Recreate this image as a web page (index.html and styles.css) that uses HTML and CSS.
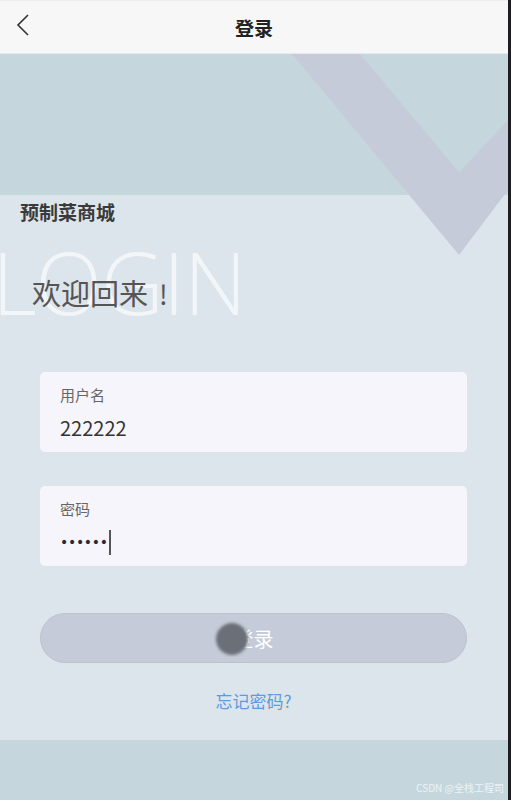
FILE: index.html
```html
<!DOCTYPE html>
<html lang="zh-CN">
<head>
  <meta charset="UTF-8" />
  <meta name="viewport" content="width=device-width, initial-scale=1.0"/>
  <title>登录</title>
  <link rel="stylesheet" href="styles.css">
</head>
<body>
  <div class="page">
    <header class="topbar">
      <span class="back">
        <svg width="16" height="22" viewBox="0 0 16 22"><path d="M13 1 L3 11 L13 21" fill="none" stroke="#333" stroke-width="1.6"/></svg>
      </span>
      <h1>登录</h1>
    </header>

    <main class="hero">
      <svg class="chevron" width="511" height="210" viewBox="0 0 511 210">
        <polygon points="292,0 360,0 459,118 511,63 511,132 459,201" fill="#c5cbd8"/>
      </svg>
      <div class="band"></div>

      <div class="brand">预制菜商城</div>
      <div class="welcome">
        <span class="login-bg">LOGIN</span>
        <span class="welcome-text">欢迎回来<span class="bang">!</span></span>
      </div>

      <div class="login-form">
        <div class="field">
          <label>用户名</label>
          <div class="value">222222</div>
        </div>
        <div class="field">
          <label>密码</label>
          <div class="value dots">••••••<span class="caret"></span></div>
        </div>

        <button class="login-btn"><span class="touch"></span>登录</button>
        <a class="forgot" href="#">忘记密码?</a>
      </div>

      <footer class="bottom">
        <span class="mark">CSDN @全栈工程司</span>
      </footer>
    </main>
  </div>
</body>
</html>
```

FILE: styles.css
```css
body {
  margin: 0;
  background: #dce5eb;
  font-family: "Noto Sans CJK SC", "Noto Sans", sans-serif;
  color: #333;
}
.page {
  width: 511px;
  height: 800px;
  box-sizing: border-box;
  border-right: 3px solid #1e1e22;
  overflow: hidden;
  display: flex;
  flex-direction: column;
}
.topbar {
  height: 54px;
  flex-shrink: 0;
  background: #f7f7f8;
  border-top: 1px solid #eceef2;
  border-bottom: 1px solid #e3e9ee;
  box-sizing: border-box;
  display: flex;
  align-items: center;
  justify-content: center;
  position: relative;
}
.topbar h1 {
  margin: 0;
  font-size: 19px;
  font-weight: bold;
  color: #222;
}
.back {
  position: absolute;
  left: 15px;
  top: 13px;
}
.hero {
  flex: 1;
  position: relative;
  display: flex;
  flex-direction: column;
  background: #dce5eb;
}
.band {
  height: 141px;
  background: #c5d7dd;
}
.chevron {
  position: absolute;
  left: 0;
  top: 0;
  z-index: 1;
}
.brand {
  position: relative;
  z-index: 2;
  padding: 4px 20px 0;
  font-size: 19px;
  font-weight: bold;
  color: #3a3a3a;
  line-height: 26px;
}
.welcome {
  position: relative;
  height: 147px;
}
.login-bg {
  position: absolute;
  left: -8px;
  top: 3px;
  font-family: "Open Sans", sans-serif;
  font-weight: 300;
  font-size: 87px;
  line-height: 106px;
  color: #f3f6f8;
  letter-spacing: -1px;
}
.welcome-text {
  position: absolute;
  left: 32px;
  top: 48px;
  font-size: 29px;
  line-height: 38px;
  color: #555;
}
.welcome-text .bang {
  margin-left: 11px;
  font-size: 27px;
}
.login-form {
  position: relative;
  z-index: 2;
  padding: 0 41px 0 40px;
  display: flex;
  flex-direction: column;
}
.field {
  background: #f6f5fb;
  border-radius: 5px;
  height: 80px;
  box-sizing: border-box;
  padding: 12px 20px 0;
  margin-bottom: 34px;
}
.field label {
  display: block;
  font-size: 15px;
  line-height: 22px;
  color: #666;
}
.field .value {
  margin-top: 9px;
  font-size: 20px;
  line-height: 26px;
  color: #333;
  display: flex;
  align-items: center;
}
.field .dots {
  font-family: "DejaVu Sans", sans-serif;
  font-size: 14px;
  letter-spacing: -0.3px;
  color: #2a2a35;
}
.caret {
  display: inline-block;
  width: 2px;
  height: 25px;
  background: #555;
  margin-left: 1px;
}
.login-btn {
  margin-top: 13px;
  height: 50px;
  border: 1px solid #bcc3d0;
  border-radius: 25px;
  background: #c5cbd8;
  color: #fff;
  font-family: inherit;
  font-size: 20px;
  position: relative;
}
.touch {
  position: absolute;
  left: 175px;
  top: 9px;
  width: 32px;
  height: 32px;
  border-radius: 50%;
  background: #6b6f78;
  filter: blur(1.5px);
}
.forgot {
  margin-top: 27px;
  align-self: center;
  font-size: 17px;
  color: #5a9be4;
  text-decoration: none;
  line-height: 22px;
}
.bottom {
  margin-top: auto;
  height: 60px;
  background: #c5d7dd;
  position: relative;
}
.mark {
  position: absolute;
  right: 4px;
  bottom: 5px;
  font-size: 10px;
  color: #eef2f4;
}
```
